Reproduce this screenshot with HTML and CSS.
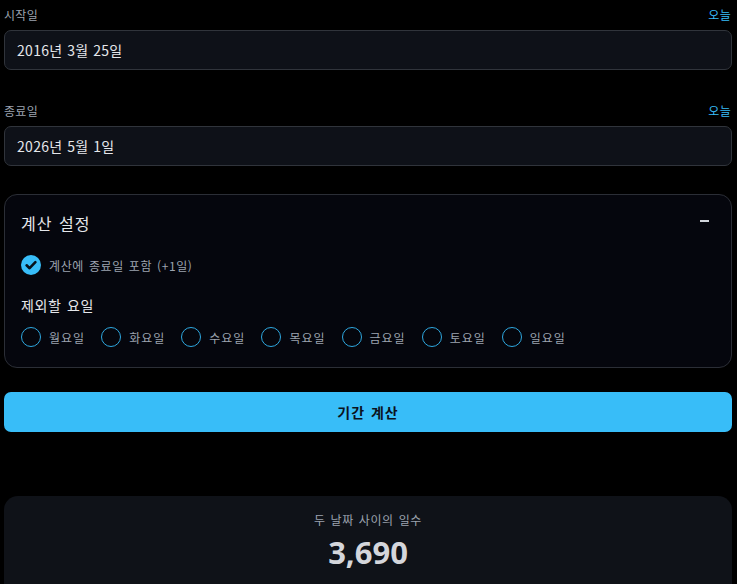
FILE: index.html
```html
<!DOCTYPE html>
<html lang="ko">
<head>
<meta charset="utf-8">
<link rel="stylesheet" href="styles.css">
</head>
<body>
<div class="page">
  <div class="field">
    <div class="field-head">
      <span class="label">시작일</span>
      <span class="today">오늘</span>
    </div>
    <div class="input">2016년 3월 25일</div>
  </div>
  <div class="field field-second">
    <div class="field-head">
      <span class="label">종료일</span>
      <span class="today">오늘</span>
    </div>
    <div class="input">2026년 5월 1일</div>
  </div>

  <div class="card">
    <div class="card-head">
      <span class="card-title">계산 설정</span>
      <span class="collapse"><span class="minus"></span></span>
    </div>
    <div class="check-row">
      <svg class="check" width="20" height="20" viewBox="0 0 20 20">
        <circle cx="10" cy="10" r="10" fill="#38bdf8"/>
        <path d="M5.6 10.3 L8.6 13.2 L14.4 7.2" fill="none" stroke="#06121c" stroke-width="2.6" stroke-linecap="round" stroke-linejoin="round"/>
      </svg>
      <span class="check-label">계산에 종료일 포함 (+1일)</span>
    </div>
    <div class="sub-title">제외할 요일</div>
    <div class="days">
      <label class="day"><span class="radio"></span><span class="day-label">월요일</span></label>
      <label class="day"><span class="radio"></span><span class="day-label">화요일</span></label>
      <label class="day"><span class="radio"></span><span class="day-label">수요일</span></label>
      <label class="day"><span class="radio"></span><span class="day-label">목요일</span></label>
      <label class="day"><span class="radio"></span><span class="day-label">금요일</span></label>
      <label class="day"><span class="radio"></span><span class="day-label">토요일</span></label>
      <label class="day"><span class="radio"></span><span class="day-label">일요일</span></label>
    </div>
  </div>

  <div class="button">기간 계산</div>

  <div class="result">
    <div class="result-label">두 날짜 사이의 일수</div>
    <div class="result-value">3,690</div>
  </div>
</div>
</body>
</html>
```

FILE: styles.css
```css
html, body {
  margin: 0;
  padding: 0;
  background: #000;
}
body {
  font-family: "Noto Sans CJK KR", "Noto Sans", sans-serif;
  color: #e5e7eb;
  overflow: hidden;
}
.page {
  padding: 6px 5px 0 4px;
  display: flex;
  flex-direction: column;
}
.field-head {
  display: flex;
  justify-content: space-between;
  align-items: center;
  height: 18px;
  margin-bottom: 6px;
  font-size: 12px;
  line-height: 18px;
  letter-spacing: 0.3px;
}
.label {
  color: #9ca3af;
}
.today {
  color: #38bdf8;
  margin-right: 1px;
}
.field-second {
  margin-top: 32px;
}
.input {
  box-sizing: border-box;
  height: 40px;
  border: 1px solid #30343b;
  border-radius: 7px;
  background: #0e1118;
  padding: 0 12px;
  display: flex;
  align-items: center;
  font-size: 14px;
  letter-spacing: 0.3px;
  word-spacing: 0.5px;
  color: #e5e7eb;
}
.card {
  margin-top: 28px;
  box-sizing: border-box;
  height: 174px;
  border: 1px solid #2b2e36;
  border-radius: 13px;
  background: #05060d;
  padding: 16px 16px 19px 16px;
  display: flex;
  flex-direction: column;
}
.card-head {
  display: flex;
  justify-content: space-between;
  align-items: center;
  height: 24px;
}
.card-title {
  font-size: 16px;
  line-height: 24px;
  letter-spacing: 1px;
  word-spacing: 1px;
  color: #e5e7eb;
}
.collapse {
  width: 22px;
  height: 22px;
  display: flex;
  align-items: center;
  justify-content: center;
}
.minus {
  width: 9px;
  height: 2px;
  background: #d1d5db;
  margin-top: -4px;
}
.check-row {
  margin-top: 20px;
  display: flex;
  align-items: center;
  height: 20px;
  gap: 8px;
}
.check {
  display: block;
  flex: none;
}
.check-label {
  font-size: 12px;
  letter-spacing: 0.6px;
  word-spacing: 1px;
  color: #9ca3af;
}
.sub-title {
  margin-top: 20px;
  font-size: 14px;
  line-height: 20px;
  letter-spacing: 0.6px;
  word-spacing: 1px;
  color: #e5e7eb;
}
.days {
  margin-top: 12px;
  display: flex;
  gap: 16px;
}
.day {
  display: flex;
  align-items: center;
  gap: 8px;
  height: 20px;
}
.radio {
  box-sizing: border-box;
  width: 20px;
  height: 20px;
  border: 1.5px solid #2ea8e0;
  border-radius: 50%;
  flex: none;
}
.day-label {
  font-size: 12px;
  letter-spacing: 1px;
  color: #9ca3af;
}
.button {
  margin-top: 24px;
  height: 40px;
  border-radius: 7px;
  background: #38bdf8;
  color: #0b1220;
  font-size: 14px;
  font-weight: 600;
  letter-spacing: 1px;
  word-spacing: 1px;
  display: flex;
  align-items: center;
  justify-content: center;
}
.result {
  margin-top: 64px;
  background: #0f1218;
  border-radius: 14px;
  padding: 15px 16px 20px;
  display: flex;
  flex-direction: column;
  align-items: center;
  height: 120px;
}
.result-label {
  font-size: 12px;
  line-height: 18px;
  letter-spacing: 0.6px;
  word-spacing: 1px;
  color: #9ca3af;
}
.result-value {
  margin-top: 3px;
  font-family: "Open Sans", "Noto Sans", sans-serif;
  font-size: 31px;
  line-height: 40px;
  font-weight: 700;
  color: #d4d6db;
}
```
